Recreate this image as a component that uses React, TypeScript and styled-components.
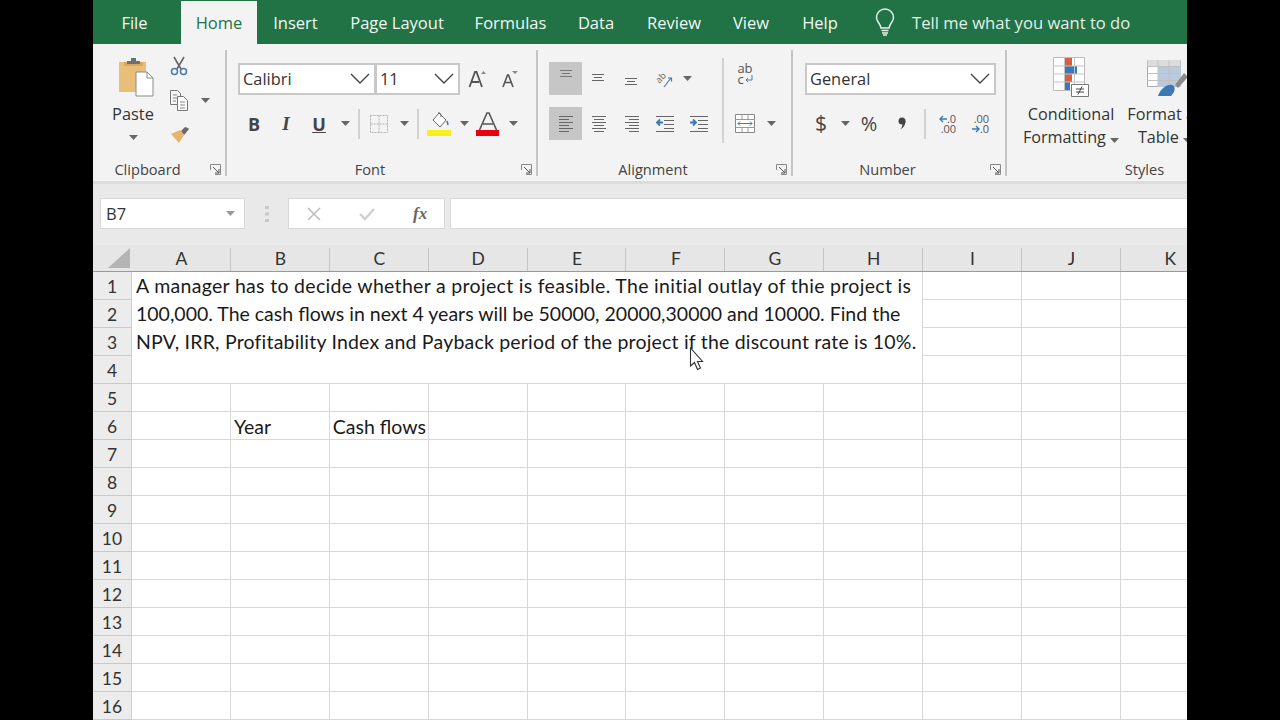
import React from "react";
import styled, { createGlobalStyle } from "styled-components";

const UI = `"Open Sans", "Noto Sans", "Liberation Sans", sans-serif`;
const CELL = `"Lato", "Open Sans", "Liberation Sans", sans-serif`;

const Global = createGlobalStyle`
  html, body { margin: 0; padding: 0; background: #000; overflow: hidden; }
  #root { width: 1280px; height: 720px; }
`;

const Stage = styled.div`
  width: 1280px; height: 720px; background: #000; display: flex; justify-content: center; overflow: hidden; position: relative;
`;
const Win = styled.div`
  width: 1094px; height: 720px; overflow: hidden; background: #fff; display: flex; flex-direction: column; font-family: ${UI};
`;
const TabBar = styled.div`
  height: 44px; flex: none; background: #217346; display: flex; align-items: stretch; padding: 1px 0 0 9px; box-sizing: border-box;
`;
const Tab = styled.div<{ $w: number; $active?: boolean }>`
  width: ${(p) => p.$w}px; flex: none; display: flex; align-items: center; justify-content: center; box-sizing: border-box;
  font-size: 16.5px; color: ${(p) => (p.$active ? "#217346" : "#f2f7f4")};
  background: ${(p) => (p.$active ? "#f3f3f3" : "transparent")};
`;
const TellMe = styled.div`
  display: flex; align-items: center; color: #e4efe8; font-size: 16.6px; padding: 0 0 1px 20px; gap: 17px; white-space: nowrap;
`;
const Ribbon = styled.div`
  height: 140px; flex: none; box-sizing: border-box; background: #f3f3f3; border-bottom: 3px solid #dcdcdc; display: flex; align-items: flex-start; padding-top: 6px; overflow: hidden;
`;
const Group = styled.div<{ $w: number }>`
  width: ${(p) => p.$w}px; flex: none; display: flex; flex-direction: column; height: 130px;
`;
const GroupBody = styled.div<{ $pl: number }>`
  height: 109px; flex: none; box-sizing: border-box; padding: 12px 0 0 ${(p) => p.$pl}px; display: flex; align-items: flex-start;
`;
const Footer = styled.div`
  height: 20px; display: flex; align-items: center; font-size: 14.6px; color: #444;
`;
const FooterLabel = styled.div`
  flex: 1; text-align: center; white-space: nowrap; padding-left: 1px;
`;
const Launcher = styled.div`
  width: 24px; flex: none; display: flex; justify-content: flex-start; padding-left: 9px; box-sizing: border-box;
`;
const GroupRule = styled.div`
  width: 2px; height: 126px; flex: none; background: #c4c4c4;
`;
const Column = styled.div<{ $gap?: number }>`
  display: flex; flex-direction: column; gap: ${(p) => p.$gap ?? 0}px;
`;
const Row = styled.div`
  display: flex; align-items: center; height: 33px;
`;
const Slot = styled.div<{ $w: number; $on?: boolean }>`
  width: ${(p) => p.$w}px; height: 33px; flex: none; display: flex; align-items: center; justify-content: center;
  background: ${(p) => (p.$on ? "#c6c6c6" : "transparent")};
`;
const MiniRule = styled.div<{ $h?: number }>`
  width: 2px; height: ${(p) => p.$h ?? 30}px; background: #d2d2d2; flex: none;
`;
const TallRule = styled.div`
  width: 2px; height: 85px; margin-top: -4px; background: #d2d2d2; flex: none;
`;
const Select = styled.div<{ $w: number }>`
  width: ${(p) => p.$w}px; height: 32px; flex: none; box-sizing: border-box; background: #fff; border: 2px solid #c8c8c8; display: flex; align-items: center; justify-content: space-between; padding: 0 4px 0 3px; font-size: 16.4px; color: #333;
  & + & { border-left-width: 1px; }
`;
const PasteCol = styled.div`
  width: 80px; flex: none; display: flex; flex-direction: column; align-items: center; margin-top: -5px; color: #333; font-size: 16.4px;
`;
const PasteIconBox = styled.div`
  line-height: 0; margin-left: 6px;
`;
const PasteLabel = styled.div`
  margin-top: 6px; line-height: 22px;
`;
const PasteCaret = styled.div`
  margin-top: 9px; line-height: 0;
`;
const SmallCol = styled.div`
  display: flex; flex-direction: column; margin: -7px 0 0 -3px; gap: 12px;
`;
const SmallRow = styled.div`
  display: flex; align-items: center; height: 22px; gap: 13px;
`;
const BigBtn = styled.div<{ $w: number }>`
  width: ${(p) => p.$w}px; flex: none; display: flex; flex-direction: column; align-items: center; margin-top: -5px; font-size: 16.2px; line-height: 23px; color: #333; white-space: nowrap;
`;
const BigIcon = styled.div`
  height: 40px; margin-bottom: 6px; line-height: 0;
`;
const Glyph = styled.span`
  font-family: "Liberation Serif", serif; font-size: 19px; font-weight: 700; font-style: italic; color: #444;
`;
const SansGlyph = styled.span<{ $s: number; $b?: boolean }>`
  font-family: ${UI}; font-size: ${(p) => p.$s}px; color: #444; font-weight: ${(p) => (p.$b ? 700 : 400)}; line-height: 1;
`;
const DecText = styled.div`
  font-size: 11px; line-height: 10px; color: #555; text-align: right; font-family: ${UI};
`;
const WrapText = styled.div`
  display: flex; flex-direction: column; align-items: flex-start; margin-top: -10px; font-size: 13px; line-height: 11px; color: #555; font-family: ${UI};
`;
const WrapLine = styled.span`
  display: flex; align-items: center; gap: 1px;
`;
const FormulaBar = styled.div`
  height: 61px; flex: none; box-sizing: border-box; background: #e9e9e9; padding: 14px 0 0 7px; display: flex; align-items: flex-start;
`;
const NameBox = styled.div`
  width: 145px; height: 31px; flex: none; box-sizing: border-box; background: #fff; border: 1px solid #d8d8d8; display: flex; align-items: center; justify-content: space-between; padding: 0 9px 0 5px; font-size: 16.5px; color: #333;
`;
const Grip = styled.div`
  width: 43px; flex: none; height: 31px; display: flex; align-items: center; justify-content: center;
`;
const FxBox = styled.div`
  width: 157px; height: 31px; flex: none; box-sizing: border-box; background: #fff; border: 1px solid #d8d8d8; display: flex; align-items: center; padding-left: 18px; gap: 38px; margin-right: 5px;
`;
const FxText = styled.span`
  font-family: "Liberation Serif", serif; font-style: italic; font-weight: 700; font-size: 17px; color: #666;
`;
const FormulaInput = styled.div`
  flex: 1; height: 31px; box-sizing: border-box; background: #fff; border: 1px solid #d8d8d8; border-right: 0;
`;
const Sheet = styled.div`
  flex: 1; display: grid; grid-template-columns: 39px repeat(11, 98.9px); grid-template-rows: 27px repeat(16, 28px); background: #fff; font-family: ${CELL}; font-size: 19.5px; color: #1a1a1a; overflow: hidden;
`;
const Corner = styled.div`
  background: #e6e6e6; border-bottom: 1px solid #9a9a9a; box-sizing: border-box; display: flex; justify-content: flex-end; align-items: flex-end; padding: 0 2px 3px 0;
`;
const ColHead = styled.div`
  background: #e6e6e6; border-bottom: 1px solid #9a9a9a; box-sizing: border-box; display: flex; align-items: center; justify-content: center; position: relative; color: #333; font-size: 17.5px;
  &::after { content: ""; position: absolute; right: 0; top: 3px; bottom: 0; width: 1px; background: #c4c4c4; }
`;
const RowHead = styled.div<{ $r: number }>`
  grid-column: 1; grid-row: ${(p) => p.$r + 1};
  background: #ececec; border-bottom: 1px solid #c8c8c8; border-right: 1px solid #d0d0d0; box-sizing: border-box; display: flex; align-items: center; justify-content: center; padding-top: 2px; color: #333; font-size: 17.5px;
`;
const Cell = styled.div<{ $r: number; $c: number }>`
  grid-column: ${(p) => p.$c + 2}; grid-row: ${(p) => p.$r + 1};
  border-right: 1px solid #d8d8d8; border-bottom: 1px solid #d8d8d8; box-sizing: border-box; display: flex; align-items: center; padding: 2px 0 0 3px; white-space: nowrap;
`;
const Merged = styled.div`
  grid-column: 2 / span 8; grid-row: 2 / span 4; box-sizing: border-box; border-right: 1px solid #d8d8d8; border-bottom: 1px solid #d8d8d8; padding-left: 4px; display: flex; flex-direction: column; white-space: nowrap;
`;
const TextLine = styled.div<{ $ls: number }>`
  line-height: 28px; letter-spacing: ${(p) => p.$ls}px;
`;
const Pointer = styled.svg`
  position: absolute; left: 689px; top: 347px;
`;

const Caret = ({ c = "#666" }: { c?: string }) => (
  <svg width="9" height="5" viewBox="0 0 9 5"><path d="M0 0h9L4.500 5z" fill={c} /></svg>
);
const Chevron = () => (
  <svg width="20" height="12" viewBox="0 0 20 12"><path d="M1 1l9 9 9-9" fill="none" stroke="#444" strokeWidth="1.4" /></svg>
);
const LauncherIcon = () => (
  <svg width="11" height="11" viewBox="0 0 11 11">
    <path d="M.5 6V.5H10.500V10.500H5" fill="none" stroke="#888" />
    <path d="M3 3l6 6M9 5v4H5" fill="none" stroke="#555" />
  </svg>
);
const PasteIcon = () => (
  <svg width="36" height="40" viewBox="0 0 36 40">
    <path d="M1 5h27v30H1z" fill="#e8bf78" />
    <path d="M6 5h19v4H6z" fill="#d9a959" />
    <path d="M9 4h4V1h5v3h4v3H9z" fill="#6f6f6f" />
    <path d="M18 15h11l6 6v18H18z" fill="#fff" stroke="#8a8a8a" />
    <path d="M29 15v6h6" fill="none" stroke="#8a8a8a" />
  </svg>
);
const Scissors = () => (
  <svg width="18" height="20" viewBox="0 0 18 20">
    <path d="M4 1l7 12M14 1L7 13" stroke="#666" strokeWidth="1.6" fill="none" />
    <circle cx="4.500" cy="15.500" r="3" fill="none" stroke="#4a7aa8" strokeWidth="1.5" />
    <circle cx="13.500" cy="15.500" r="3" fill="none" stroke="#4a7aa8" strokeWidth="1.5" />
  </svg>
);
const CopyIcon = () => (
  <svg width="18" height="21" viewBox="0 0 18 21">
    <path d="M.5.5h7l3 3v11H.5z" fill="#f6f6f6" stroke="#777" />
    <path d="M7.500 6.500h6l4 4v10h-10z" fill="#fff" stroke="#777" />
    <path d="M3 5h4M3 8h4M3 11h3M10 12h5M10 15h5M10 18h5" stroke="#888" />
  </svg>
);
const BrushIcon = () => (
  <svg width="20" height="18" viewBox="0 0 20 18">
    <path d="M11 6l4-4 3 1 1 1-4 5-1 1z" fill="#6a6a6a" />
    <path d="M1 9l9-4 4 5-5 8z" fill="#e6b56a" />
  </svg>
);
const BordersIcon = () => (
  <svg width="18" height="18" viewBox="0 0 18 18">
    <path d="M.5.5h17v17H.5z M9 .5v17M.5 9h17" fill="none" stroke="#b4b4b4" strokeDasharray="2 1" />
  </svg>
);
const FillIcon = () => (
  <svg width="24" height="24" viewBox="0 0 24 24">
    <path d="M12 1l7 7-6 7-7-7z" fill="#fff" stroke="#666" />
    <path d="M11 1c2-1 3 1 3 4" fill="none" stroke="#666" />
    <path d="M20 9l1 4" stroke="#4a7aa8" strokeWidth="1.6" />
    <path d="M0 18h24v6H0z" fill="#f7f01e" />
  </svg>
);
const FontColor = () => (
  <svg width="24" height="24" viewBox="0 0 24 24">
    <path d="M3.500 18L11 1h2l7.500 17M7 12h10" fill="none" stroke="#555" strokeWidth="1.6" />
    <path d="M0 18h23v6H0z" fill="#e8000f" />
  </svg>
);
const GrowA = ({ up }: { up: boolean }) => (
  <svg width="18" height="18" viewBox="0 0 18 18">
    {up ? (
      <>
        <path d="M1.500 17L7 2h1.500L14 17M4 12h7" fill="none" stroke="#555" strokeWidth="1.8" />
        <path d="M13 4l2.500-3L18 4z" fill="#888" />
      </>
    ) : (
      <>
        <path d="M3 17L7.500 5h1L13 17M5 12.500h6" fill="none" stroke="#555" strokeWidth="1.6" />
        <path d="M12 1h6l-3 3z" fill="#888" />
      </>
    )}
  </svg>
);
const Lines = ({ rows, c = "#666" }: { rows: [number, number, number][]; c?: string }) => (
  <svg width="18" height="19" viewBox="0 0 18 19">
    {rows.map(([x, w, y], i) => (
      <path key={i} d={`M${x} ${y + 0.5}h${w}`} stroke={c} />
    ))}
  </svg>
);
const Orient = () => (
  <svg width="28" height="28" viewBox="-4 -4 28 28">
    <text x="1" y="11" fontFamily="Open Sans, sans-serif" fontSize="9" fill="#666" transform="rotate(-45 7 9)">ab</text>
    <path d="M9 18l7-9M13 9h3.500v3.500" stroke="#4a7aa8" strokeWidth="1.2" fill="none" />
  </svg>
);
const ReturnArrow = () => (
  <svg width="8" height="8" viewBox="0 0 8 8">
    <path d="M7 0v5H1M3 3L1 5l2 2" fill="none" stroke="#4a7aa8" />
  </svg>
);
const MergeIcon = () => (
  <svg width="20" height="19" viewBox="0 0 20 19">
    <path d="M.5.5h19v18H.5z" fill="#fff" stroke="#888" />
    <path d="M.5 5.500h19M.5 13.500h19M7 .5v5M13 .5v5M7 13.500v5M13 13.500v5" stroke="#999" />
    <path d="M3 9.500h14M5 7.500l-2 2 2 2M15 7.500l2 2-2 2" fill="none" stroke="#4a7aa8" />
  </svg>
);
const CommaIcon = () => (
  <svg width="8" height="13" viewBox="0 0 8 13">
    <circle cx="4" cy="4" r="3.500" fill="#444" />
    <path d="M7.500 4c0 4-2 7-5.500 8.500C4 10.500 4.500 8.500 4.500 6z" fill="#444" />
  </svg>
);
const CondFmt = () => (
  <svg width="36" height="40" viewBox="0 0 36 40">
    <path d="M.5.5h31v33H.5z" fill="#fff" stroke="#bbb" />
    <path d="M12 1h7v8h-7z M12 17h7v8h-7z" fill="#d9603c" />
    <path d="M12 9h12v8H12z" fill="#3d78b6" />
    <path d="M12 25h5v8h-5z" fill="#3d78b6" />
    <path d="M.5 9h31M.5 17h31M.5 25h31M11.500 .5v33M21.500 .5v33" stroke="#c4c4c4" />
    <path d="M18.500 27.500h17v12h-17z" fill="#fff" stroke="#777" />
    <path d="M23 32h8M23 35h8M29 29.500l-4 8" stroke="#444" fill="none" />
  </svg>
);
const FmtTable = () => (
  <svg width="48" height="40" viewBox="-6 -2 48 40">
    <path d="M.5 1.500h33v26H.5z" fill="#fff" stroke="#aaa" />
    <path d="M.5 1h33v6H.5z" fill="#dcdcdc" />
    <path d="M11 7h23v21H11z" fill="#b9c9de" />
    <path d="M.5 7.500h33M.5 14.500h33M.5 21.500h33M11 1.500v26M22 1.500v26" stroke="#c0c0c0" />
    <path d="M28 26l9-12 4 4-10 11z" fill="#8a8a8a" />
    <path d="M11 37c3-8 9-12 14-11 3 1 3 4 2 7l-3 4z" fill="#3d78b6" />
  </svg>
);
const Bulb = () => (
  <svg width="20" height="28" viewBox="0 0 20 28">
    <path d="M10 1a8.500 8.500 0 0 0-8.500 8.500c0 4 3.500 5.500 4.500 10.500h8c1-5 4.500-6.500 4.500-10.500A8.500 8.500 0 0 0 10 1z" fill="none" stroke="#e8f1ec" strokeWidth="1.5" />
    <path d="M6.500 22.500h7M7 25h6M8 27h4" stroke="#e8f1ec" strokeWidth="1.5" />
  </svg>
);
const Cross = () => (
  <svg width="14" height="14" viewBox="0 0 14 14"><path d="M1 1l12 12M13 1L1 13" stroke="#bcbcbc" strokeWidth="1.5" /></svg>
);
const Check = () => (
  <svg width="16" height="14" viewBox="0 0 16 14"><path d="M1 7l5 5L15 2" fill="none" stroke="#cfcfcf" strokeWidth="2.4" /></svg>
);
const GripDots = () => (
  <svg width="4" height="16" viewBox="0 0 4 16">
    <path d="M0 0h4v3H0zM0 6.500h4v3H0zM0 13h4v3H0z" fill="#c8c8c8" />
  </svg>
);
const CornerTri = () => (
  <svg width="22" height="20" viewBox="0 0 22 20"><path d="M22 0v20H0z" fill="#b4b4b4" /></svg>
);
const Arrow = ({ left }: { left?: boolean }) => (
  <svg width="8" height="8" viewBox="0 0 8 8">
    <path d={left ? "M8 4H1M4 1L1 4l3 3" : "M0 4h7M4 1l3 3-3 3"} fill="none" stroke="#3d78b6" strokeWidth="1.4" />
  </svg>
);
const DecreaseDec = ({ flip }: { flip?: boolean }) => (
  <Column>
    <DecText>{flip ? ".00" : <><Arrow left />.0</>}</DecText>
    <DecText>{flip ? <><Arrow />.0</> : ".00"}</DecText>
  </Column>
);
const Indent = ({ out }: { out?: boolean }) => (
  <svg width="20" height="19" viewBox="0 0 20 19">
    <path d="M1 2.500h18M9 6.500h10M9 10.500h10M9 14.500h10M1 17.500h18" stroke="#666" />
    <path d={out ? "M8 8.500H2M5 5.500l-3 3 3 3" : "M1 8.500h6M4 5.500l3 3-3 3"} fill="none" stroke="#3d78b6" strokeWidth="1.8" />
  </svg>
);

const tabs: [string, number][] = [["File", 65], ["__gap", 14], ["Home", 76], ["Insert", 77], ["Page Layout", 126], ["Formulas", 101], ["Data", 70], ["Review", 86], ["View", 68], ["Help", 70]];
const cols = "ABCDEFGHIJK".split("");
const rows = Array.from({ length: 16 }, (_, i) => i + 1);

const topA: [number, number, number][] = [[3, 12, 1], [5, 8, 4], [3, 12, 7]];
const midA: [number, number, number][] = [[2, 12, 5], [4, 8, 8], [2, 12, 11]];
const botA: [number, number, number][] = [[2, 12, 9], [4, 8, 12], [2, 12, 15]];
const left: [number, number, number][] = [[2, 14, 2], [2, 10, 5], [2, 14, 8], [2, 10, 11], [2, 14, 14], [2, 10, 17]];
const center: [number, number, number][] = [[2, 14, 2], [4, 10, 5], [2, 14, 8], [4, 10, 11], [2, 14, 14], [4, 10, 17]];
const right: [number, number, number][] = [[2, 14, 2], [6, 10, 5], [2, 14, 8], [6, 10, 11], [2, 14, 14], [6, 10, 17]];

export default function App() {
  return (
    <Stage>
      <Global />
      <Win>
        <TabBar>
          {tabs.map(([t, w]) =>
            t === "__gap" ? <Tab key={t} $w={w} /> : <Tab key={t} $w={w} $active={t === "Home"}>{t}</Tab>
          )}
          <TellMe><Bulb />Tell me what you want to do</TellMe>
        </TabBar>
        <Ribbon>
          <Group $w={132}>
            <GroupBody $pl={0}>
              <PasteCol>
                <PasteIconBox><PasteIcon /></PasteIconBox>
                <PasteLabel>Paste</PasteLabel>
                <PasteCaret><Caret /></PasteCaret>
              </PasteCol>
              <SmallCol>
                <SmallRow><Scissors /></SmallRow>
                <SmallRow><CopyIcon /><Caret /></SmallRow>
                <SmallRow><BrushIcon /></SmallRow>
              </SmallCol>
            </GroupBody>
            <Footer><FooterLabel>Clipboard</FooterLabel><Launcher><LauncherIcon /></Launcher></Footer>
          </Group>
          <GroupRule />
          <Group $w={309}>
            <GroupBody $pl={11}>
              <Column $gap={12}>
                <Row>
                  <Select $w={138}><span>Calibri</span><Chevron /></Select>
                  <Select $w={84}><span>11</span><Chevron /></Select>
                  <Slot $w={34}><GrowA up /></Slot>
                  <Slot $w={30}><GrowA up={false} /></Slot>
                </Row>
                <Row>
                  <Slot $w={32}><SansGlyph $s={18} $b>B</SansGlyph></Slot>
                  <Slot $w={32}><Glyph>I</Glyph></Slot>
                  <Slot $w={34}><SansGlyph $s={18} $b><u>U</u></SansGlyph></Slot>
                  <Slot $w={18}><Caret /></Slot>
                  <Slot $w={10}><MiniRule /></Slot>
                  <Slot $w={30}><BordersIcon /></Slot>
                  <Slot $w={20}><Caret /></Slot>
                  <Slot $w={8}><MiniRule /></Slot>
                  <Slot $w={34}><FillIcon /></Slot>
                  <Slot $w={16}><Caret /></Slot>
                  <Slot $w={32}><FontColor /></Slot>
                  <Slot $w={18}><Caret /></Slot>
                </Row>
              </Column>
            </GroupBody>
            <Footer><FooterLabel>Font</FooterLabel><Launcher><LauncherIcon /></Launcher></Footer>
          </Group>
          <GroupRule />
          <Group $w={253}>
            <GroupBody $pl={11}>
              <Column $gap={12}>
                <Row>
                  <Slot $w={33} $on><Lines rows={topA} c="#777" /></Slot>
                  <Slot $w={33}><Lines rows={midA} /></Slot>
                  <Slot $w={33}><Lines rows={botA} /></Slot>
                  <Slot $w={33}><Orient /></Slot>
                  <Slot $w={13}><Caret /></Slot>
                </Row>
                <Row>
                  <Slot $w={33} $on><Lines rows={left} /></Slot>
                  <Slot $w={33}><Lines rows={center} /></Slot>
                  <Slot $w={33}><Lines rows={right} /></Slot>
                  <Slot $w={34}><Indent out /></Slot>
                  <Slot $w={33}><Indent /></Slot>
                </Row>
              </Column>
              <Slot $w={7} />
              <TallRule />
              <Column $gap={12}>
                <Row>
                  <Slot $w={42}>
                    <WrapText>
                      <span>ab</span>
                      <WrapLine>c<ReturnArrow /></WrapLine>
                    </WrapText>
                  </Slot>
                </Row>
                <Row><Slot $w={42}><MergeIcon /></Slot><Slot $w={10}><Caret /></Slot></Row>
              </Column>
            </GroupBody>
            <Footer><FooterLabel>Alignment</FooterLabel><Launcher><LauncherIcon /></Launcher></Footer>
          </Group>
          <GroupRule />
          <Group $w={212}>
            <GroupBody $pl={12}>
              <Column $gap={12}>
                <Row><Select $w={191}><span>General</span><Chevron /></Select></Row>
                <Row>
                  <Slot $w={32}><SansGlyph $s={21}>$</SansGlyph></Slot>
                  <Slot $w={16}><Caret /></Slot>
                  <Slot $w={32}><SansGlyph $s={20}>%</SansGlyph></Slot>
                  <Slot $w={34}><CommaIcon /></Slot>
                  <Slot $w={12}><MiniRule /></Slot>
                  <Slot $w={33}><DecreaseDec /></Slot>
                  <Slot $w={33}><DecreaseDec flip /></Slot>
                </Row>
              </Column>
            </GroupBody>
            <Footer><FooterLabel>Number</FooterLabel><Launcher><LauncherIcon /></Launcher></Footer>
          </Group>
          <GroupRule />
          <Group $w={274}>
            <GroupBody $pl={10}>
              <BigBtn $w={108}>
                <BigIcon><CondFmt /></BigIcon>
                <span>Conditional</span>
                <span>Formatting <Caret /></span>
              </BigBtn>
              <BigBtn $w={80}>
                <BigIcon><FmtTable /></BigIcon>
                <span>Format as</span>
                <span>Table <Caret /></span>
              </BigBtn>
            </GroupBody>
            <Footer><FooterLabel>Styles</FooterLabel></Footer>
          </Group>
        </Ribbon>
        <FormulaBar>
          <NameBox><span>B7</span><Caret c="#999" /></NameBox>
          <Grip><GripDots /></Grip>
          <FxBox><Cross /><Check /><FxText>fx</FxText></FxBox>
          <FormulaInput />
        </FormulaBar>
        <Sheet>
          <Corner><CornerTri /></Corner>
          {cols.map((c) => <ColHead key={c}>{c}</ColHead>)}
          <Merged>
            <TextLine $ls={0.31}>A manager has to decide whether a project is feasible. The initial outlay of thie project is</TextLine>
            <TextLine $ls={0}>100,000. The cash flows in next 4 years will be 50000, 20000,30000 and 10000. Find the</TextLine>
            <TextLine $ls={0.2}>NPV, IRR, Profitability Index and Payback period of the project if the discount rate is 10%.</TextLine>
          </Merged>
          {rows.map((r) => (
            <React.Fragment key={r}>
              <RowHead $r={r}>{r}</RowHead>
              {cols.map((c, i) =>
                r <= 4 && i < 8 ? null : (
                  <Cell key={c} $r={r} $c={i}>
                    {r === 6 && c === "B" ? "Year" : r === 6 && c === "C" ? "Cash flows" : ""}
                  </Cell>
                )
              )}
            </React.Fragment>
          ))}
        </Sheet>
      </Win>
      <Pointer width="16" height="25" viewBox="0 0 16 25">
        <path d="M1.500 1v18l4-3.500 3 7 3-1.500-3-6.500h5z" fill="#fff" stroke="#333" strokeWidth="1.1" />
      </Pointer>
    </Stage>
  );
}
